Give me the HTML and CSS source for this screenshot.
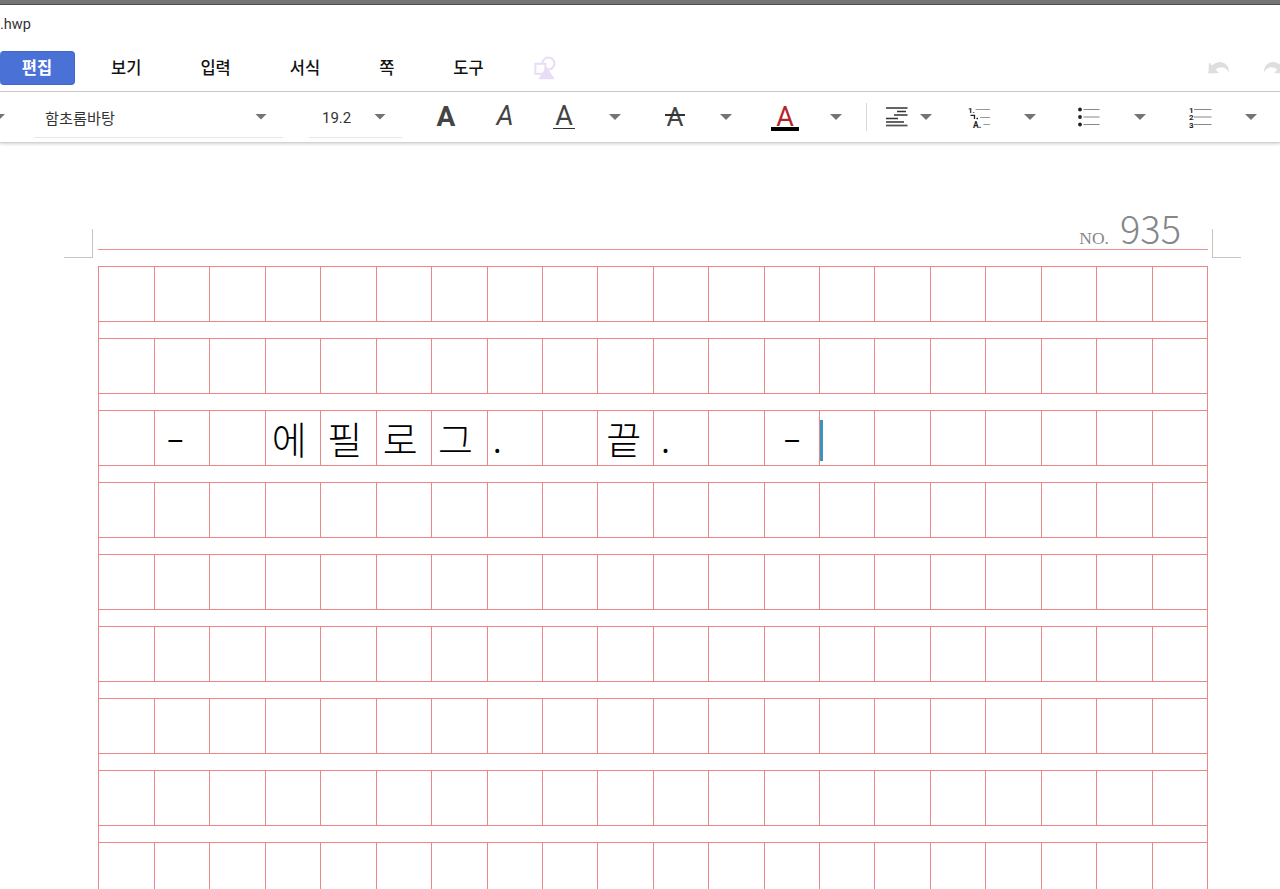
FILE: index.html
```html
<!DOCTYPE html>
<html lang="ko">
<head>
  <meta charset="UTF-8" />
  <meta name="viewport" content="width=device-width, initial-scale=1.0" />
  <title>.hwp</title>
  <link rel="stylesheet" href="styles.css">
</head>
<body>
  <header class="app-header">
    <div class="title">.hwp</div>
    <nav class="menu">
      <span class="tab active">편집</span>
      <span class="tab">보기</span>
      <span class="tab">입력</span>
      <span class="tab">서식</span>
      <span class="tab">쪽</span>
      <span class="tab">도구</span>
      <svg class="shapes" width="22" height="24" viewBox="0 0 22 24">
        <circle cx="14.4" cy="7.5" r="6" fill="none" stroke="#e9dcf5" stroke-width="2"/>
        <rect x="1.4" y="7.8" width="10" height="10" fill="#fff" stroke="#e9dcf5" stroke-width="2"/>
        <path d="M12.5 10.5L20.7 23.3H4.3z" fill="#e9dcf5"/>
      </svg>
      <div class="history">
        <svg width="22" height="14" viewBox="0 0 22 14"><path d="M1 1L.3 12.6l10.6-.7-3.2-3.3C12 5 18 5.5 21 11.2 21.5 2 11-3 4 4.6z" fill="#dedede"/></svg>
        <svg width="22" height="14" viewBox="0 0 22 14"><path d="M21 1l.7 11.6-10.6-.7 3.2-3.3C10 5 4 5.5 1 11.2.5 2 11-3 18 4.6z" fill="#dedede"/></svg>
      </div>
    </nav>
    <div class="toolbar">
      <div class="tool first"><i class="caret"></i></div>
      <div class="select"><span>함초롬바탕</span><i class="caret"></i></div>
      <div></div>
      <div class="select size"><span>19.2</span><i class="caret"></i></div>
      <div></div>
      <div class="tool"><span class="letter bold">A</span></div>
      <div class="tool"><span class="letter italic">A</span></div>
      <div class="tool"><span class="letter under">A</span></div>
      <div class="tool"><i class="caret"></i></div>
      <div class="tool"><span class="letter strike">A</span></div>
      <div class="tool"><i class="caret"></i></div>
      <div class="tool"><span class="letter color">A</span></div>
      <div class="tool"><i class="caret"></i></div>
      <div class="tool"><i class="divider"></i></div>
      <div class="tool">
        <svg class="align" width="22" height="20" viewBox="0 0 22 20" stroke="#333" stroke-width="1.3">
          <path d="M0 1H21.5M11 4.5H20M8 8H21.5M0 11.5H12M0 15H18"/>
          <path d="M0 18.5H21.5" stroke-width="1.8" stroke="#555"/>
        </svg>
      </div>
      <div class="tool"><i class="caret"></i></div>
      <div class="tool">
        <svg class="list" width="24" height="24" viewBox="0 0 24 24">
          <path d="M8.5 4.5H23M13 12.5H23M16.5 19.5H23" stroke="#999" stroke-width="1.2"/>
          <text x="1" y="7.5">1.</text>
          <path d="M3.5 10.4H7.5V14M9.5 13.5h1.5" fill="none" stroke="#222" stroke-width="1.3"/>
          <text class="roman" x="6" y="22.5">A.</text>
        </svg>
      </div>
      <div class="tool"><i class="caret"></i></div>
      <div class="tool">
        <svg width="22" height="20" viewBox="0 0 22 20">
          <path d="M5.5 2.5H21.5M5.5 10H21.5M5.5 17.5H21.5" stroke="#888" stroke-width="1.2"/>
          <g fill="#222"><circle cx="2" cy="2.5" r="1.9"/><circle cx="2" cy="10" r="1.9"/><circle cx="2" cy="17.5" r="1.9"/></g>
        </svg>
      </div>
      <div class="tool"><i class="caret"></i></div>
      <div class="tool">
        <svg class="list" width="24" height="24" viewBox="0 0 24 24">
          <path d="M6 4.5H23.5M6 12H23.5M6 19.5H23.5" stroke="#888" stroke-width="1.2"/>
          <text x="1" y="7.5">1</text>
          <text x="1" y="15">2</text>
          <text x="1" y="22.5">3</text>
        </svg>
      </div>
      <div class="tool"><i class="caret"></i></div>
    </div>
  </header>

  <main class="page">
    <div class="page-head">
      <i class="corner left"></i>
      <div class="number"><span class="no">NO.</span><span class="digits">935</span></div>
      <i class="corner right"></i>
    </div>
    <div class="sheet" id="sheet"></div>
  </main>

  <script>
    const sheet = document.getElementById('sheet');
    const ROWS = 9;
    const COLS = 20;
    const cursor = { row: 2, col: 13 };

    // one character per cell: row -> column -> character
    const cellText = {
      2: { 1: '–', 3: '에', 4: '필', 5: '로', 6: '그', 7: '.', 9: '끝', 10: '.', 12: '–' }
    };

    for (let r = 0; r < ROWS; r++) {
      const row = document.createElement('div');
      row.className = 'row';
      for (let c = 0; c < COLS; c++) {
        const cell = document.createElement('div');
        const ch = (cellText[r] || {})[c];
        cell.className = 'cell';
        if (ch) {
          const span = document.createElement('span');
          span.textContent = ch;
          cell.classList.add(ch === '.' ? 'dot' : ch === '–' ? 'dash' : 'syllable');
          cell.appendChild(span);
        }
        if (r === cursor.row && c === cursor.col) cell.classList.add('cursor');
        row.appendChild(cell);
      }
      sheet.appendChild(row);
    }
  </script>
</body>
</html>
```
FILE: styles.css
```css
* {
  box-sizing: border-box;
}

html, body {
  margin: 0;
  height: 100%;
  overflow: hidden;
  background: #fff;
  font-family: Roboto, "Noto Sans CJK KR", sans-serif;
  color: #111;
}

.app-header {
  height: 143px;
  border-top: 4px solid #757575;
  border-bottom: 1px solid #d2d2d2;
  box-shadow: 0 1px 3px rgba(0, 0, 0, 0.18);
}

.title {
  height: 47px;
  padding-top: 11px;
  border-top: 1px solid #4c4c4c;
  font-size: 14.5px;
  line-height: 17px;
  color: #333;
}

.menu {
  display: flex;
  align-items: center;
  height: 41px;
  padding-bottom: 7px;
  border-bottom: 1px solid #c8c8c8;
  font: 500 16.5px/32px "Noto Sans CJK KR", sans-serif;
}

.tab {
  flex: none;
  height: 34px;
  margin-right: 59px;
}

.tab.active {
  width: 75px;
  margin-right: 36px;
  border: 1px solid #3f68cc;
  border-left: 0;
  border-radius: 4px;
  background: #4a72d6;
  color: #fff;
  font-weight: 700;
  line-height: 30px;
  text-align: center;
}

.shapes {
  margin-left: -8.5px;
}

.history {
  display: flex;
  flex: none;
  gap: 33px;
  margin-left: auto;
  margin-right: -5px;
}

.toolbar {
  display: grid;
  grid-template-columns: 34px 249px 26px 93px 20px 48px 70px 48px 54px 66px 36px 82px 20px 40px 20px 40px 66px 36px 82px 20px 100px 2px;
  height: 50px;
}

.tool {
  display: flex;
  align-items: center;
  justify-content: center;
  min-width: 0;
}

.tool > * {
  flex: none;
}

.tool.first {
  justify-content: flex-start;
  margin-left: -7px;
}

.caret {
  flex: none;
  width: 12px;
  height: 6px;
  background: #747474;
  clip-path: polygon(0 0, 100% 0, 50% 100%);
}

.select {
  display: flex;
  align-items: center;
  justify-content: space-between;
  height: 46px;
  padding: 4px 16px 0 11px;
  border-bottom: 1px solid #e6e6e6;
  font: 400 15.2px "Noto Sans CJK KR", sans-serif;
  color: #333;
}

.select.size {
  padding-left: 13px;
  font: 400 15px Roboto, sans-serif;
}

.size span {
  padding-top: 2px;
}

.letter {
  position: relative;
  height: 26px;
  font-size: 27px;
  line-height: 26px;
  color: #444;
}

.bold {
  font-size: 28px;
  font-weight: 700;
}

.italic {
  line-height: 25px;
  font-style: italic;
}

.under {
  line-height: 25px;
}

.strike {
  font-size: 26px;
}

.under::after,
.strike::after,
.color::after {
  content: "";
  position: absolute;
  left: -2px;
  right: -2px;
  bottom: 1px;
  height: 1px;
  background: #333;
}

.strike::after {
  bottom: 14px;
  height: 2px;
}

.color {
  color: #b3242b;
}

.color::after {
  left: -5px;
  right: -5px;
  bottom: -1px;
  height: 4px;
  background: #000;
}

.divider {
  width: 1px;
  height: 28px;
  background: #d8d8d8;
}

.align {
  margin-left: 1px;
}

.list text {
  font: 700 8px Roboto, sans-serif;
  fill: #222;
}

.list .roman {
  font-size: 8.5px;
}

.page {
  width: 1280px;
  padding: 67px 72px 0 98px;
}

.page-head {
  position: relative;
  height: 40px;
  border-bottom: 1px solid #f08f8f;
}

.number {
  display: flex;
  align-items: baseline;
  justify-content: flex-end;
  gap: 11px;
  padding-right: 27px;
  color: #85878a;
}

.no {
  font: 17.5px/20px "Liberation Serif", serif;
}

.digits {
  font: 300 38px/36px "Noto Sans CJK KR", sans-serif;
}

.corner {
  position: absolute;
  top: 19px;
  width: 29px;
  height: 29px;
  border-bottom: 1px solid #c4c4c4;
}

.corner.left {
  left: -34px;
  border-right: 1px solid #c4c4c4;
}

.corner.right {
  right: -33px;
  border-left: 1px solid #c4c4c4;
}

.sheet {
  display: grid;
  grid-auto-rows: 56px;
  row-gap: 16px;
  margin-top: 16px;
  border-left: 1px solid #ec8585;
  border-right: 1px solid #ec8585;
}

.row {
  display: grid;
  grid-template-columns: 55px repeat(19, 1fr);
  grid-template-rows: 54px;
  border-top: 1px solid #ec8585;
  border-bottom: 1px solid #ec8585;
}

.cell {
  position: relative;
  display: flex;
  align-items: center;
  min-width: 0;
  border-left: 1px solid #ec8585;
  font: 300 38px/54px "Noto Sans CJK KR", sans-serif;
  color: #000;
}

.cell:first-child {
  border-left: 0;
}

.syllable {
  padding-left: 6px;
}

.syllable:nth-child(10) {
  padding-left: 8px;
}

.dot {
  padding-left: 5px;
}

.dot:nth-child(11) {
  padding-left: 7px;
}

.dash {
  padding: 0 0 2px 12px;
  font-size: 31px;
  font-weight: 400;
  line-height: 40px;
}

.dash:nth-child(13) {
  padding-left: 19px;
}

.cursor::before {
  content: "";
  position: absolute;
  left: 0;
  top: 9px;
  width: 3px;
  height: 41px;
  background: #3c93bb;
}
```
